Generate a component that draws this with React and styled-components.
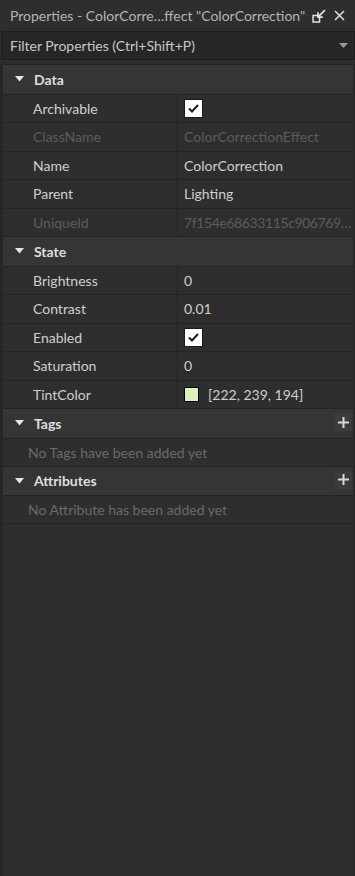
import React from 'react'
import styled, { createGlobalStyle } from 'styled-components'

const GlobalStyle = createGlobalStyle`
    html, body {
        margin: 0;
        padding: 0;
        background: #2e2e2e;
    }
    body {
        font-family: Lato, "Noto Sans", sans-serif;
        -webkit-font-smoothing: antialiased;
    }
`

const Panel = styled.div`
    width: 355px;
    height: 876px;
    display: flex;
    flex-direction: column;
    background: #2e2e2e;
    overflow: hidden;
`
const TitleBar = styled.div`
    height: 31px;
    display: flex;
    align-items: center;
    padding: 0 6px 0 10px;
    color: #b4b4b4;
    font-size: 14px;
`
const TitleText = styled.div`
    flex: 1;
    white-space: nowrap;
    overflow: hidden;
`
const TitleButton = styled.div`
    width: 20px;
    height: 20px;
    display: flex;
    align-items: center;
    justify-content: center;
    color: #dcdcdc;
`
const FilterBar = styled.div`
    height: 27px;
    margin: 0 0 0 1px;
    display: flex;
    align-items: center;
    padding: 0 6px 0 8px;
    background: #262626;
    border: 1px solid #1d1d1d;
    color: #c8c8c8;
    font-size: 14px;
`
const FilterText = styled.div`
    flex: 1;
`
const Body = styled.div`
    flex: 1;
    margin-top: 4px;
    border-left: 3px solid #262626;
    border-right: 2px solid #282828;
    display: flex;
    flex-direction: column;
`
const SectionHeader = styled.div`
    height: 28.5px;
    display: flex;
    align-items: center;
    background: #353535;
    border-top: 1px solid #242424;
    color: #dedede;
    font-weight: 700;
    font-size: 14px;
`
const Caret = styled.div`
    width: 30px;
    display: flex;
    justify-content: center;
    padding-left: 1px;
`
const HeaderTitle = styled.div`
    flex: 1;
`
const AddButton = styled.div`
    width: 18px;
    height: 18px;
    margin-right: 1px;
    background: #3b3b3b;
    display: flex;
    align-items: center;
    justify-content: center;
    align-self: flex-start;
    margin-top: 4px;
`
const Row = styled.div`
    height: 27.5px;
    display: grid;
    grid-template-columns: 175px 1fr;
    border-top: 1px solid #242424;
    font-size: 14px;
    color: ${(props) => (props.disabled ? '#5c5c5c' : '#cfcfcf')};
`
const Label = styled.div`
    display: flex;
    align-items: center;
    padding-left: 30px;
    border-right: 1px solid #242424;
    white-space: nowrap;
`
const Value = styled.div`
    display: flex;
    align-items: center;
    padding-left: 6px;
    gap: 9px;
    white-space: nowrap;
    overflow: hidden;
    letter-spacing: ${(props) => (props.tight ? '-0.4px' : 'normal')};
`
const Message = styled.div`
    height: 27px;
    display: flex;
    align-items: center;
    padding-left: 25px;
    border-top: 1px solid #242424;
    color: #6a6a6a;
    font-size: 14px;
`
const Checkbox = styled.div`
    width: 17px;
    height: 17px;
    background: #ffffff;
    border: 1px solid #1a1a1a;
    display: flex;
    align-items: center;
    justify-content: center;
`
const Swatch = styled.div`
    width: 13px;
    height: 13px;
    border: 1px solid #000;
    background: ${(props) => props.color};
`
const Fill = styled.div`
    flex: 1;
    border-top: 1px solid #242424;
`

const Check = () => (
    <Checkbox>
        <svg width="11" height="9" viewBox="0 0 11 9">
            <path d="M1 4.5 L4 7.5 L10 1" fill="none" stroke="#1e1e1e" strokeWidth="2" />
        </svg>
    </Checkbox>
)

const Triangle = () => (
    <svg width="9" height="6" viewBox="0 0 9 6">
        <path d="M0 0 H9 L4.5 5.5 Z" fill="#e6e6e6" />
    </svg>
)

const Plus = () => (
    <svg width="11" height="11" viewBox="0 0 11 11">
        <path d="M5.5 0 V11 M0 5.5 H11" stroke="#d8d8d8" strokeWidth="2" />
    </svg>
)

const sections = [
    {
        title: 'Data',
        rows: [
            { label: 'Archivable', check: true },
            { label: 'ClassName', value: 'ColorCorrectionEffect', disabled: true },
            { label: 'Name', value: 'ColorCorrection' },
            { label: 'Parent', value: 'Lighting' },
            { label: 'UniqueId', value: '7f154e68633115c906769…', disabled: true, tight: true },
        ],
    },
    {
        title: 'State',
        rows: [
            { label: 'Brightness', value: '0' },
            { label: 'Contrast', value: '0.01' },
            { label: 'Enabled', check: true },
            { label: 'Saturation', value: '0' },
            { label: 'TintColor', value: '[222, 239, 194]', color: 'rgb(222, 239, 194)' },
        ],
    },
    { title: 'Tags', add: true, message: 'No Tags have been added yet' },
    { title: 'Attributes', add: true, message: 'No Attribute has been added yet' },
]

const App = () => {
    return (
        <Panel>
            <GlobalStyle />
            <TitleBar>
                <TitleText>Properties - ColorCorre…ffect "ColorCorrection"</TitleText>
                <TitleButton>
                    <svg width="14" height="14" viewBox="0 0 13 13">
                        <path d="M1 6 H7 V12 H1 Z" fill="none" stroke="#e0e0e0" strokeWidth="1.4" />
                        <path d="M12 1 L5.5 7.5 M5.5 3 V7.5 H10" fill="none" stroke="#e0e0e0" strokeWidth="1.6" />
                    </svg>
                </TitleButton>
                <TitleButton>
                    <svg width="11" height="11" viewBox="0 0 11 11">
                        <path d="M1 1 L10 10 M10 1 L1 10" stroke="#e0e0e0" strokeWidth="1.5" />
                    </svg>
                </TitleButton>
            </TitleBar>
            <FilterBar>
                <FilterText>Filter Properties (Ctrl+Shift+P)</FilterText>
                <svg width="9" height="5" viewBox="0 0 9 5">
                    <path d="M0 0 H9 L4.5 5 Z" fill="#9a9a9a" />
                </svg>
            </FilterBar>
            <Body>
                {sections.map((section) => (
                    <React.Fragment key={section.title}>
                        <SectionHeader>
                            <Caret><Triangle /></Caret>
                            <HeaderTitle>{section.title}</HeaderTitle>
                            {section.add && <AddButton><Plus /></AddButton>}
                        </SectionHeader>
                        {section.rows && section.rows.map((row) => (
                            <Row key={row.label} disabled={row.disabled}>
                                <Label>{row.label}</Label>
                                <Value tight={row.tight}>
                                    {row.check && <Check />}
                                    {row.color && <Swatch color={row.color} />}
                                    {row.value}
                                </Value>
                            </Row>
                        ))}
                        {section.message && <Message>{section.message}</Message>}
                    </React.Fragment>
                ))}
                <Fill />
            </Body>
        </Panel>
    )
}

export default App
